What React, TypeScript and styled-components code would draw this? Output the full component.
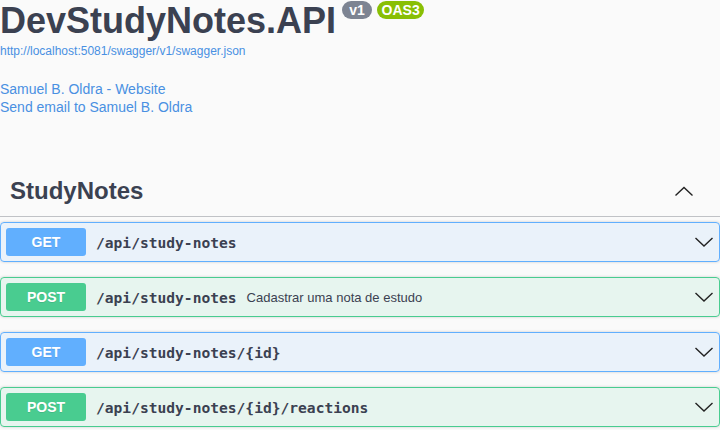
import React from 'react';
import styled, { createGlobalStyle } from 'styled-components';

const GlobalStyle = createGlobalStyle`
  html, body {
    margin: 0;
    padding: 0;
    background: #fafafa;
    font-family: "Liberation Sans", Arial, sans-serif;
    color: #3b4151;
  }
`;

type Method = 'get' | 'post';

const methodColors: Record<Method, { main: string; bg: string }> = {
  get: { main: '#61affe', bg: 'rgba(97, 175, 254, 0.1)' },
  post: { main: '#49cc90', bg: 'rgba(73, 204, 144, 0.1)' },
};

const operations: { method: Method; path: string; summary?: string }[] = [
  { method: 'get', path: '/api/study-notes' },
  { method: 'post', path: '/api/study-notes', summary: 'Cadastrar uma nota de estudo' },
  { method: 'get', path: '/api/study-notes/{id}' },
  { method: 'post', path: '/api/study-notes/{id}/reactions' },
];

const Arrow: React.FC<{ up?: boolean }> = ({ up }) => (
  <svg width="20" height="20" viewBox="0 0 20 20" aria-hidden="true">
    <polyline
      points={up ? '1.5,14.5 10,6.5 18.5,14.5' : '1.5,6 10,14 18.5,6'}
      fill="none"
      stroke="#222"
      strokeWidth="1.4"
    />
  </svg>
);

const App: React.FC = () => {
  return (
    <Page>
      <GlobalStyle />
      <Info>
        <Title>
          DevStudyNotes.API
          <Badge color="#7d8492" $minWidth={30}>v1</Badge>
          <Badge color="#89bf04">OAS3</Badge>
        </Title>
        <BaseUrl href="#">http://localhost:5081/swagger/v1/swagger.json</BaseUrl>
        <Contact>
          <Link href="#">Samuel B. Oldra - Website</Link>
          <Link href="#">Send email to Samuel B. Oldra</Link>
        </Contact>
      </Info>

      <TagSection>
        <TagHeader>
          <TagName>StudyNotes</TagName>
          <TagToggle>
            <Arrow up />
          </TagToggle>
        </TagHeader>
        <Operations>
          {operations.map((op, i) => (
            <OpBlock key={i} $method={op.method}>
              <MethodBadge $method={op.method}>{op.method.toUpperCase()}</MethodBadge>
              <OpPath>{op.path}</OpPath>
              {op.summary && <OpSummary>{op.summary}</OpSummary>}
              <OpToggle>
                <Arrow />
              </OpToggle>
            </OpBlock>
          ))}
        </Operations>
      </TagSection>
    </Page>
  );
};

const Page = styled.div`
  width: 720px;
  height: 430px;
  overflow: hidden;
`;

const Info = styled.div`
  display: flex;
  flex-direction: column;
  align-items: flex-start;
`;

const Title = styled.h2`
  display: flex;
  align-items: flex-start;
  margin: 0;
  font-size: 36px;
  font-weight: 700;
  line-height: 41px;
  color: #3b4151;
`;

const Badge = styled.span<{ color: string; $minWidth?: number }>`
  display: inline-flex;
  justify-content: center;
  align-items: center;
  height: 18px;
  min-width: ${(p) => (p.$minWidth ? `${p.$minWidth}px` : 'auto')};
  box-sizing: border-box;
  margin: 1px 0 0 5px;
  padding: 0 4.5px;
  border-radius: 57px;
  background: ${(p) => p.color};
  color: #fff;
  font-size: 14px;
  font-weight: 700;
  line-height: 18px;

  &:first-of-type {
    margin-left: 6px;
  }
`;

const BaseUrl = styled.a`
  margin-top: 4px;
  font-size: 12px;
  line-height: 13px;
  color: #4990e2;
  text-decoration: none;
`;

const Contact = styled.div`
  display: flex;
  flex-direction: column;
  align-items: flex-start;
  margin-top: 22px;
`;

const Link = styled.a`
  font-size: 14px;
  line-height: 18px;
  color: #4990e2;
  text-decoration: none;
`;

const TagSection = styled.div`
  margin-top: 53px;
`;

const TagHeader = styled.h3`
  display: flex;
  align-items: center;
  margin: 0 0 5px;
  padding: 8px 20px 12px 10px;
  border-bottom: 1px solid rgba(59, 65, 81, 0.3);
  font-size: 24px;
  font-weight: 700;
  line-height: 27px;
  color: #3b4151;
`;

const TagName = styled.span`
  flex: 1;
`;

const TagToggle = styled.span`
  display: flex;
  margin-right: 6px;
`;

const Operations = styled.div`
  display: flex;
  flex-direction: column;
  gap: 15px;
`;

const OpBlock = styled.div<{ $method: Method }>`
  display: flex;
  align-items: center;
  padding: 5px;
  border: 1px solid ${(p) => methodColors[p.$method].main};
  border-radius: 4px;
  background: ${(p) => methodColors[p.$method].bg};
  box-shadow: 0 0 3px rgba(0, 0, 0, 0.19);
`;

const MethodBadge = styled.span<{ $method: Method }>`
  min-width: 80px;
  padding: 6px 0;
  border-radius: 3px;
  background: ${(p) => methodColors[p.$method].main};
  color: #fff;
  font-size: 14px;
  font-weight: 700;
  line-height: 16px;
  text-align: center;
  text-shadow: 0 1px 0 rgba(0, 0, 0, 0.1);
`;

const OpPath = styled.span`
  padding: 0 10px;
  font-family: "DejaVu Sans Mono", "Liberation Mono", monospace;
  font-size: 14.6px;
  font-weight: 700;
  color: #3b4151;
`;

const OpSummary = styled.span`
  font-size: 13px;
  color: #3b4151;
`;

const OpToggle = styled.span`
  display: flex;
  margin-left: auto;
`;

export default App;
